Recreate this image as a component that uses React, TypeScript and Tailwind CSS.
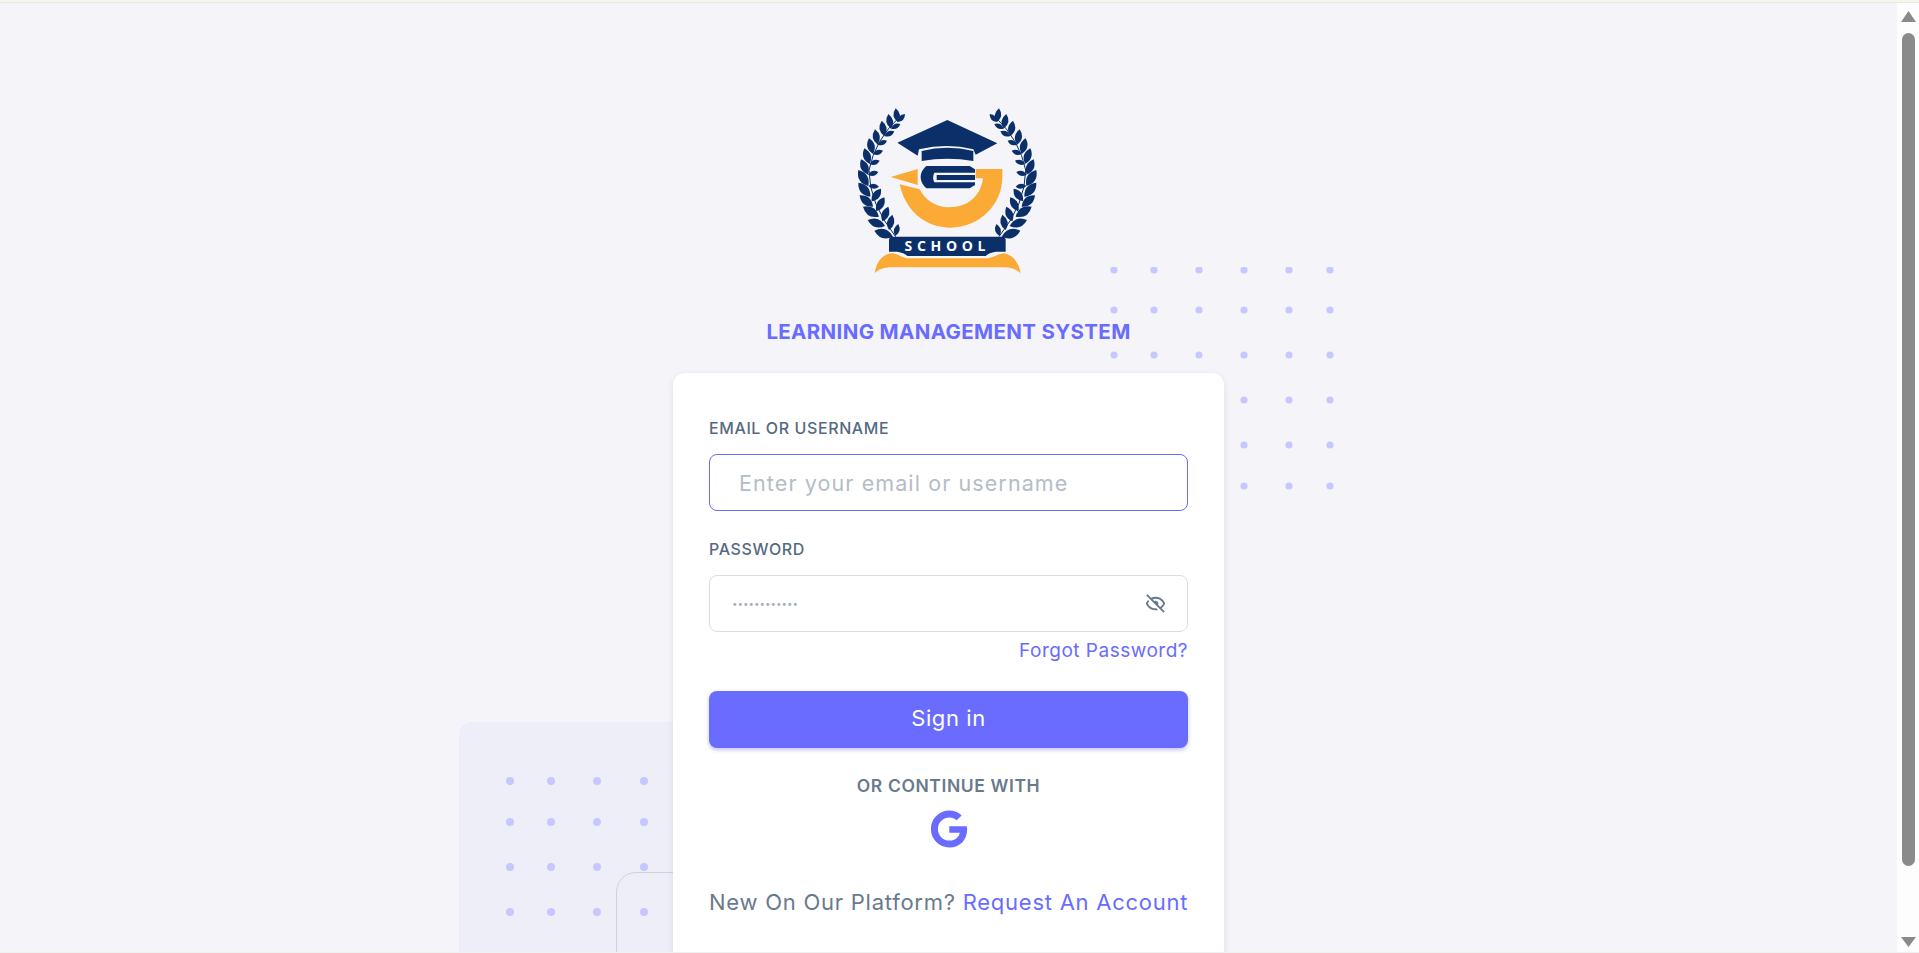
import { BiHide } from "react-icons/bi";
import { FaGoogle } from "react-icons/fa";

const leaves: [number, number, number, number][] = [
	[176, 96, 170, 55],
	[176, 96, 198, 72],
	[156, 116, 148, 72],
	[156, 116, 184, 102],
	[136, 138, 128, 92],
	[136, 138, 166, 124],
	[116, 164, 108, 118],
	[116, 164, 144, 152],
	[102, 192, 90, 145],
	[102, 192, 132, 182],
	[92, 222, 76, 175],
	[92, 222, 122, 212],
	[87, 254, 66, 208],
	[87, 254, 118, 246],
	[88, 288, 58, 240],
	[88, 288, 120, 290],
	[94, 320, 58, 278],
	[98, 334, 126, 296],
	[102, 350, 62, 316],
	[112, 364, 136, 322],
	[120, 380, 72, 350],
	[130, 394, 148, 350],
	[138, 408, 86, 390],
	[150, 420, 160, 374],
	[162, 440, 106, 422],
	[168, 438, 178, 402],
];

// lens shaped leaf between stem point and tip
const leafPath = ([x1, y1, x2, y2]: [number, number, number, number]) => {
	const mx = (x1 + x2) / 2;
	const my = (y1 + y2) / 2;
	const nx = -(y2 - y1) * 0.46;
	const ny = (x2 - x1) * 0.46;
	return `M${x1} ${y1}Q${mx + nx} ${my + ny} ${x2} ${y2}Q${mx - nx} ${my - ny} ${x1} ${y1}Z`;
};

const Logo = () => (
	<svg viewBox="0 0 660 600" className="w-[220px] h-[200px] shrink-0">
		{[0, 1].map((side) => (
			<g
				key={side}
				transform={side ? "translate(650 0) scale(-1 1)" : undefined}
				fill="#0b3069"
			>
				{leaves.map((leaf, i) => (
					<path key={i} d={leafPath(leaf)} />
				))}
				<path
					d="M180 82Q108 150 90 240Q90 340 170 440"
					fill="none"
					stroke="#0b3069"
					strokeWidth="3"
				/>
			</g>
		))}
		{/* cap */}
		<path
			d="M175 158L325 90L475 160L410 194L403 178Q325 158 240 178L236 197Z"
			fill="#0b3069"
		/>
		<path
			d="M248 183Q325 164 403 183V213Q325 200 248 213Z"
			fill="#0b3069"
		/>
		{/* orange swoosh */}
		<path
			d="M410 237H490V262C490 345 420 413 335 413C260 413 200 365 182 283L242 298C258 330 290 352 330 352C385 352 425 320 432 265H410Z"
			fill="#fcaa36"
		/>
		{/* pencil */}
		<path d="M155 261L236 237V285Z" fill="#fcaa36" />
		<path
			d="M262 228H392L408 238V285L392 295H262Q245 280 245 261Q245 242 262 228Z"
			fill="#0b3069"
		/>
		<path
			d="M286 248H408V255H293V270H408V277H286Q279 262 286 248Z"
			fill="#f4f4f9"
		/>
		{/* base ribbon */}
		<path
			d="M107 550C112 515 130 492 160 490C180 492 190 505 210 505H440C460 505 475 492 495 490C522 494 540 520 545 550C532 538 518 532 495 532H160C135 532 118 538 107 550Z"
			fill="#fcaa36"
		/>
		<path
			d="M160 440H490Q500 440 500 450V485H470Q450 488 440 498H205Q195 488 175 485H150V450Q150 440 160 440Z"
			fill="#0b3069"
		/>
		<text
			x="325"
			y="482"
			textAnchor="middle"
			fill="#ffffff"
			fontSize="42"
			fontWeight="700"
			letterSpacing="14"
			fontFamily="'Open Sans', sans-serif"
		>
			SCHOOL
		</text>
	</svg>
);

const DotGrid = ({ xs, ys, r }: { xs: number[]; ys: number[]; r: number }) => (
	<svg
		width={xs[xs.length - 1] + 6}
		height={ys[ys.length - 1] + 6}
		fill="#c7c7ff"
	>
		{ys.map((y) =>
			xs.map((x) => <circle key={`${x}-${y}`} cx={x} cy={y} r={r} />),
		)}
	</svg>
);

const Scrollbar = () => (
	<aside className="w-[22px] shrink-0 bg-[#fdfdfd] flex flex-col items-center">
		<svg width="15" height="11" className="mt-[8px] shrink-0" fill="#8a8a8a">
			<path d="M7.5 0L15 11H0Z" />
		</svg>
		<div className="mt-[11px] w-[13px] h-[833px] rounded-full bg-[#8a8a8a]" />
		<svg width="15" height="10" className="mt-[71px] shrink-0" fill="#8a8a8a">
			<path d="M0 0H15L7.5 10Z" />
		</svg>
	</aside>
);

const App = () => {
	return (
		<div className="h-[953px] w-[1919px] overflow-hidden flex flex-col bg-[#f4f4f9] font-['Inter',sans-serif]">
			<div className="h-[3px] shrink-0 bg-[#f5f6ee] border-b border-[#e9e9e4]" />
			<div className="flex flex-1 min-h-0">
				<main className="flex-1 overflow-hidden flex flex-col items-center pt-[87px]">
					<Logo />
					<h1 className="mt-[28px] mb-[27px] h-[28px] shrink-0 text-[20.5px] leading-[28px] font-bold text-[#696cff] tracking-[0.35px] whitespace-nowrap">
						LEARNING MANAGEMENT SYSTEM
					</h1>

					<div className="relative w-[551px] shrink-0">
						<div className="absolute left-[437px] top-[-106px]">
							<DotGrid
								xs={[4, 44, 89, 134, 179, 220]}
								ys={[3, 43, 88, 133, 178, 219]}
								r={3.6}
							/>
						</div>
						<div className="absolute left-[-214px] top-[349px] w-[320px] h-[300px] rounded-xl bg-[#eeeef9]">
							<div className="absolute left-[47px] top-[55px]">
								<DotGrid xs={[4, 45, 91, 138]} ys={[4, 45, 90, 135]} r={4} />
							</div>
							<div className="absolute left-[157px] top-[150px] w-[200px] h-[200px] rounded-[20px] border border-[#cfd1dc]" />
						</div>

						<div className="relative h-[620px] rounded-xl bg-white shadow-[0_2px_6px_rgba(67,89,113,0.12)] px-9 pt-[43px]">
							<label className="block h-6 text-[16px] leading-6 font-medium text-[#566a7f] tracking-[0.6px]">
								EMAIL OR USERNAME
							</label>
							<input
								className="mt-[14px] block w-full h-[57px] rounded-lg bg-white border border-[#696cff] pl-[29px] pr-4 text-[21.5px] tracking-[1.1px] outline-none placeholder:text-[#b4bdc6]"
								placeholder="Enter your email or username"
							/>

							<label className="mt-[26px] block h-6 text-[16px] leading-6 font-medium text-[#566a7f] tracking-[0.6px]">
								PASSWORD
							</label>
							<div className="relative mt-[14px]">
								<input
									className="block w-full h-[57px] rounded-lg bg-white border border-[#d9dee3] pl-[22px] pr-12 text-[16.5px] font-bold outline-none placeholder:text-[#a1acb8]"
									placeholder="············"
								/>
								<BiHide className="absolute right-[21px] top-[17px] text-[23px] text-[#697a8d]" />
							</div>

							<div className="mt-[5px] h-[27px] text-right text-[19px] leading-[27px] tracking-[0.5px] text-[#696cff]">
								Forgot Password?
							</div>

							<button className="mt-[27px] pb-[2px] block w-full h-[57px] rounded-lg bg-[#696cff] text-white text-[22px] tracking-[0.6px] shadow-[0_2px_4px_rgba(105,108,255,0.4)]">
								Sign in
							</button>

							<div className="mt-[26px] h-6 text-center text-[17.5px] leading-6 font-semibold tracking-[0.6px] text-[#697a8d]">
								OR CONTINUE WITH
							</div>
							<div className="mt-3 flex justify-center">
								<FaGoogle className="text-[38px] text-[#696cff]" />
							</div>

							<p className="mt-[41px] h-[27px] text-[22px] leading-[27px] tracking-[0.75px] whitespace-nowrap text-[#697a8d]">
								New On Our Platform?{" "}
								<span className="text-[#696cff]">Request An Account</span>
							</p>
						</div>
					</div>
				</main>
				<Scrollbar />
			</div>
			<div className="h-px shrink-0 bg-[#f0f0f0]" />
		</div>
	);
};

export default App;
